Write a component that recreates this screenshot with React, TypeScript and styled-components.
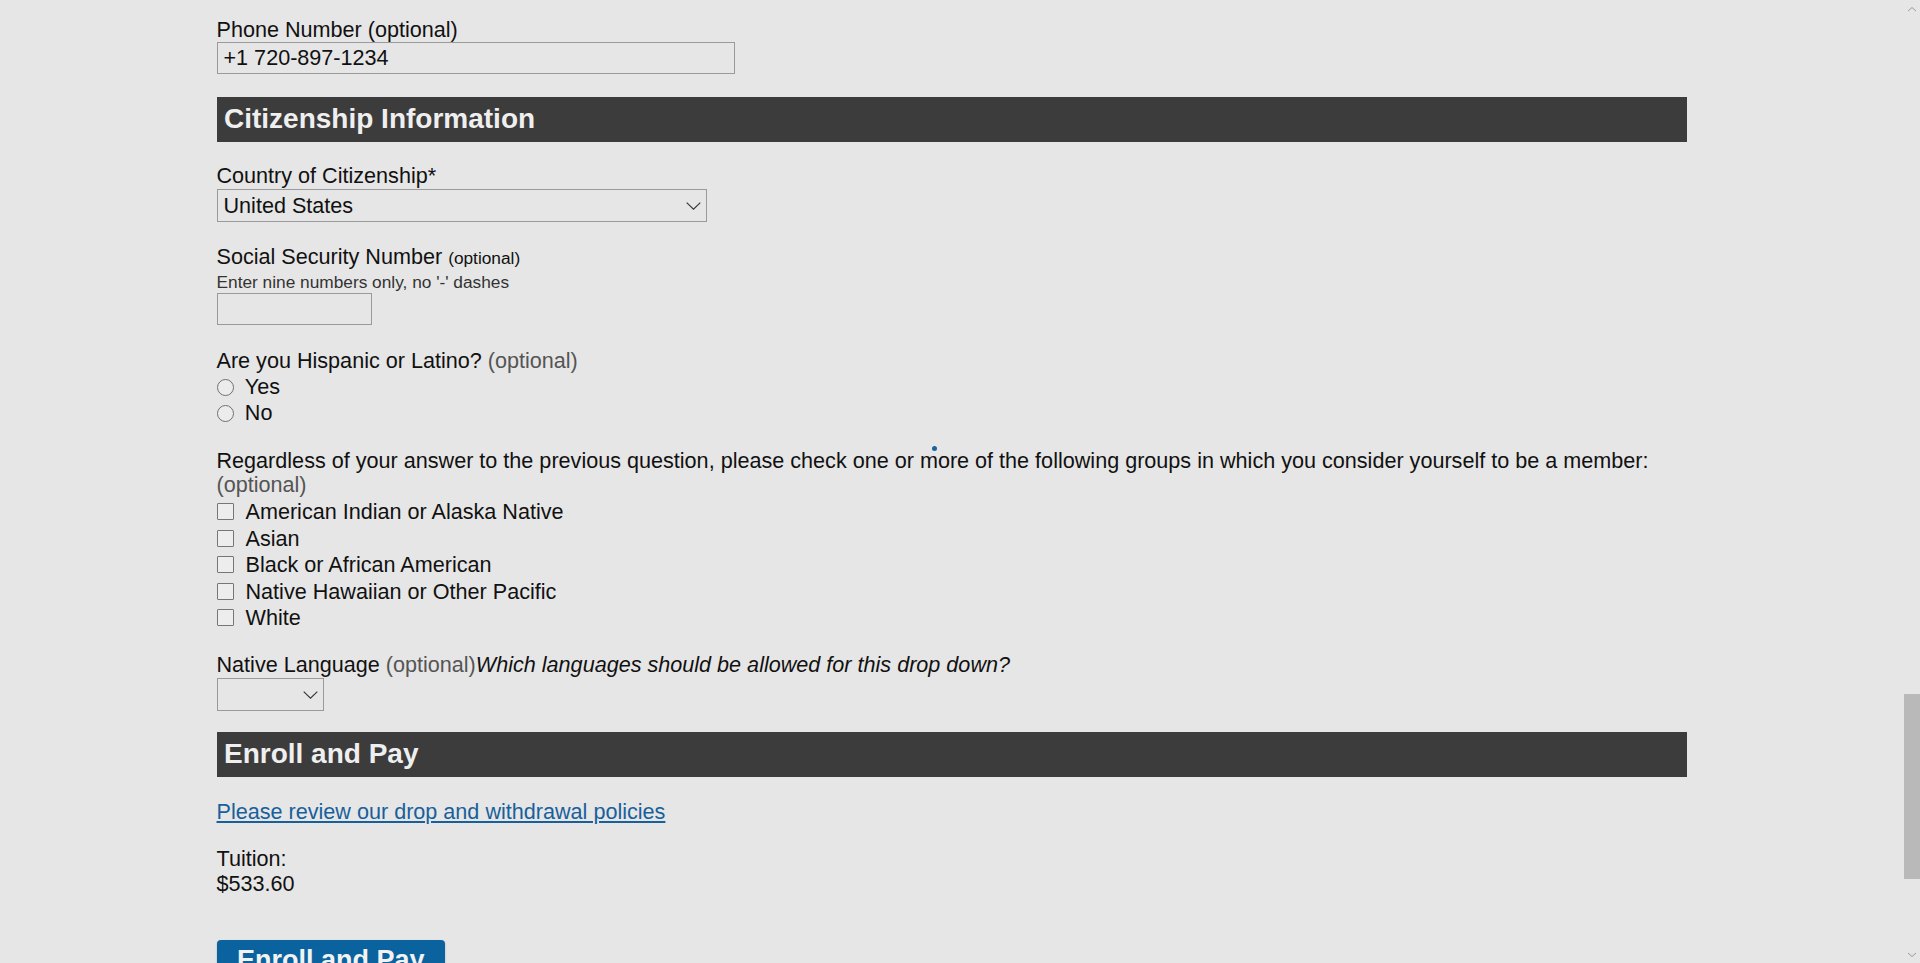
import React from "react";
import styled, { createGlobalStyle } from "styled-components";

const GlobalStyle = createGlobalStyle`
  html, body {
    margin: 0;
    padding: 0;
    background: #e6e6e6;
  }
  * { box-sizing: border-box; }
  body {
    font-family: "Liberation Sans", Arial, sans-serif;
    color: #111;
  }
`;

const Page = styled.div`
  display: flex;
  height: 100vh;
  overflow: hidden;
  background: #e6e6e6;
`;

const Main = styled.main`
  flex: 1;
  overflow: hidden;
`;

const Container = styled.div`
  position: relative;
  width: 1470px;
  margin: 0 auto;
  padding-top: 17px;
  font-size: 21.6px;
  line-height: 24.8px;
`;

const Field = styled.div<{ $mb?: number }>`
  margin-bottom: ${(p) => (p.$mb ?? 23)}px;
`;

const Label = styled.div<{ $nudge?: number }>`
  font-size: 21.6px;
  line-height: 24.8px;
  color: #111;
  white-space: nowrap;
  padding-top: ${(p) => p.$nudge ?? 0}px;
  margin-bottom: ${(p) => -(p.$nudge ?? 0)}px;
`;

const Optional = styled.span<{ $gray?: boolean; $small?: boolean }>`
  color: ${(p) => (p.$gray ? "#555" : "#111")};
  font-size: ${(p) => (p.$small ? "17.3px" : "inherit")};
`;

const Note = styled.i`
  color: #111;
`;

const Hint = styled.div`
  font-size: 17.3px;
  line-height: 20px;
  color: #333;
  margin: 2px 0 1px 0;
`;

const TextInput = styled.input<{ $w: number }>`
  display: block;
  width: ${(p) => p.$w}px;
  height: 32px;
  border: 1px solid #9a9a9a;
  background: transparent;
  font-family: "Liberation Sans", Arial, sans-serif;
  font-size: 21.6px;
  color: #111;
  padding: 0 6px;
  margin: 0;
  outline: none;
`;

const SelectWrap = styled.div<{ $w: number }>`
  position: relative;
  width: ${(p) => p.$w}px;
  height: 33px;
`;

const Select = styled.select`
  appearance: none;
  -webkit-appearance: none;
  display: block;
  width: 100%;
  height: 100%;
  border: 1px solid #9a9a9a;
  border-radius: 0;
  background: transparent;
  font-family: "Liberation Sans", Arial, sans-serif;
  font-size: 21.6px;
  color: #111;
  padding: 0 30px 0 6px;
  margin: 0;
  outline: none;
`;

const Chevron = styled.svg`
  position: absolute;
  right: 6px;
  top: 13px;
  width: 15px;
  height: 8px;
  pointer-events: none;
`;

const SectionHeader = styled.h2<{ $mb?: number }>`
  display: flex;
  align-items: center;
  height: 45px;
  margin: 0 0 ${(p) => p.$mb ?? 22}px 0;
  padding: 0 7.5px;
  background: #3c3c3c;
  color: #efefef;
  font-family: "Liberation Sans", Arial, sans-serif;
  font-weight: bold;
  font-size: 28px;
  line-height: 32px;
`;

const Options = styled.div<{ $mt: number }>`
  margin-top: ${(p) => p.$mt}px;
`;

const OptionRow = styled.label<{ $h: number }>`
  display: flex;
  align-items: flex-start;
  height: ${(p) => p.$h}px;
  font-size: 21.6px;
  line-height: 24.8px;
  color: #111;
`;

const Radio = styled.input.attrs({ type: "radio" })`
  appearance: none;
  -webkit-appearance: none;
  flex: none;
  width: 17px;
  height: 17px;
  margin: 3.6px 11.3px 0 0;
  border: 1.5px solid #6f6f6f;
  border-radius: 50%;
  background: #ececec;
`;

const Checkbox = styled.input.attrs({ type: "checkbox" })`
  appearance: none;
  -webkit-appearance: none;
  flex: none;
  width: 17px;
  height: 17px;
  margin: 2.8px 12px 0 0;
  border: 1.5px solid #767676;
  border-radius: 1px;
  background: #ededed;
`;

const Link = styled.a`
  display: block;
  width: fit-content;
  color: #17609b;
  text-decoration: underline;
  text-underline-offset: 2px;
  font-size: 21.6px;
  line-height: 24.8px;
`;

const Text = styled.div`
  font-size: 21.6px;
  line-height: 24.8px;
  color: #111;
`;

const PrimaryButton = styled.button`
  display: block;
  margin: 43.4px 0 0 0;
  padding: 5px 20.5px 8px;
  border: none;
  border-radius: 4px;
  background: #0a629e;
  color: #f2f2f2;
  font-family: "Liberation Sans", Arial, sans-serif;
  font-weight: bold;
  font-size: 27px;
  line-height: 31px;
  box-shadow: 0 1px 2px rgba(0, 0, 0, 0.25);
  cursor: pointer;
`;

const FocusDot = styled.span`
  position: absolute;
  left: 715px;
  top: 446px;
  width: 5px;
  height: 5px;
  border-radius: 50%;
  background: #1d62a0;
`;

const Scrollbar = styled.div`
  flex: none;
  width: 17px;
  height: 100%;
  display: flex;
  flex-direction: column;
  background: #e6e6e6;
`;

const ScrollArrow = styled.div`
  flex: none;
  height: 17px;
  display: flex;
  align-items: center;
  justify-content: center;
`;

const Track = styled.div`
  flex: 1;
  display: flex;
  flex-direction: column;
`;

const Thumb = styled.div`
  flex: none;
  margin-top: 677px;
  height: 185px;
  width: 16px;
  margin-left: 1px;
  background: #b9b9b9;
`;

const ChevronIcon = () => (
  <Chevron viewBox="0 0 15 8">
    <path d="M0.7 0.7 L7.5 7.2 L14.3 0.7" fill="none" stroke="#333" strokeWidth="1.1" />
  </Chevron>
);

const ArrowIcon = ({ up }: { up?: boolean }) => (
  <svg width="10" height="6" viewBox="0 0 10 6">
    <path
      d={up ? "M1 5 L5 1.5 L9 5" : "M1 1 L5 4.5 L9 1"}
      fill="none"
      stroke="#9a9a9a"
      strokeWidth="1"
    />
  </svg>
);

const races = [
  "American Indian or Alaska Native",
  "Asian",
  "Black or African American",
  "Native Hawaiian or Other Pacific",
  "White",
];

export default function App() {
  return (
    <>
      <GlobalStyle />
      <Page>
        <Main>
          <Container>
            <Field>
              <Label $nudge={1.2}>Phone Number (optional)</Label>
              <TextInput $w={518} defaultValue="+1 720-897-1234" />
            </Field>

            <SectionHeader>Citizenship Information</SectionHeader>

            <Field>
              <Label>Country of Citizenship*</Label>
              <SelectWrap $w={490}>
                <Select defaultValue="us">
                  <option value="us">United States</option>
                </Select>
                <ChevronIcon />
              </SelectWrap>
            </Field>

            <Field $mb={23.7}>
              <Label>
                Social Security Number <Optional $small>(optional)</Optional>
              </Label>
              <Hint>Enter nine numbers only, no '-' dashes</Hint>
              <TextInput $w={155} />
            </Field>

            <Field $mb={21.2}>
              <Label>
                Are you Hispanic or Latino? <Optional $gray>(optional)</Optional>
              </Label>
              <Options $mt={1.6}>
                <OptionRow $h={26}>
                  <Radio name="hispanic" />
                  Yes
                </OptionRow>
                <OptionRow $h={26}>
                  <Radio name="hispanic" />
                  No
                </OptionRow>
              </Options>
            </Field>

            <Field $mb={20.2}>
              <Label>
                Regardless of your answer to the previous question, please check one or more of the following groups in
                which you consider yourself to be a member:
              </Label>
              <Label>
                <Optional $gray>(optional)</Optional>
              </Label>
              <Options $mt={2.2}>
                {races.map((r) => (
                  <OptionRow key={r} $h={26.5}>
                    <Checkbox />
                    {r}
                  </OptionRow>
                ))}
              </Options>
            </Field>

            <Field $mb={21}>
              <Label>
                Native Language <Optional $gray>(optional)</Optional>
                <Note>Which languages should be allowed for this drop down?</Note>
              </Label>
              <SelectWrap $w={107}>
                <Select defaultValue="">
                  <option value=""></option>
                </Select>
                <ChevronIcon />
              </SelectWrap>
            </Field>

            <SectionHeader $mb={23.2}>Enroll and Pay</SectionHeader>

            <Field $mb={21.8}>
              <Link href="#">Please review our drop and withdrawal policies</Link>
            </Field>

            <Text>Tuition:</Text>
            <Text>$533.60</Text>

            <PrimaryButton type="button">Enroll and Pay</PrimaryButton>

            <FocusDot />
          </Container>
        </Main>
        <Scrollbar>
          <ScrollArrow>
            <ArrowIcon up />
          </ScrollArrow>
          <Track>
            <Thumb />
          </Track>
          <ScrollArrow>
            <ArrowIcon />
          </ScrollArrow>
        </Scrollbar>
      </Page>
    </>
  );
}
